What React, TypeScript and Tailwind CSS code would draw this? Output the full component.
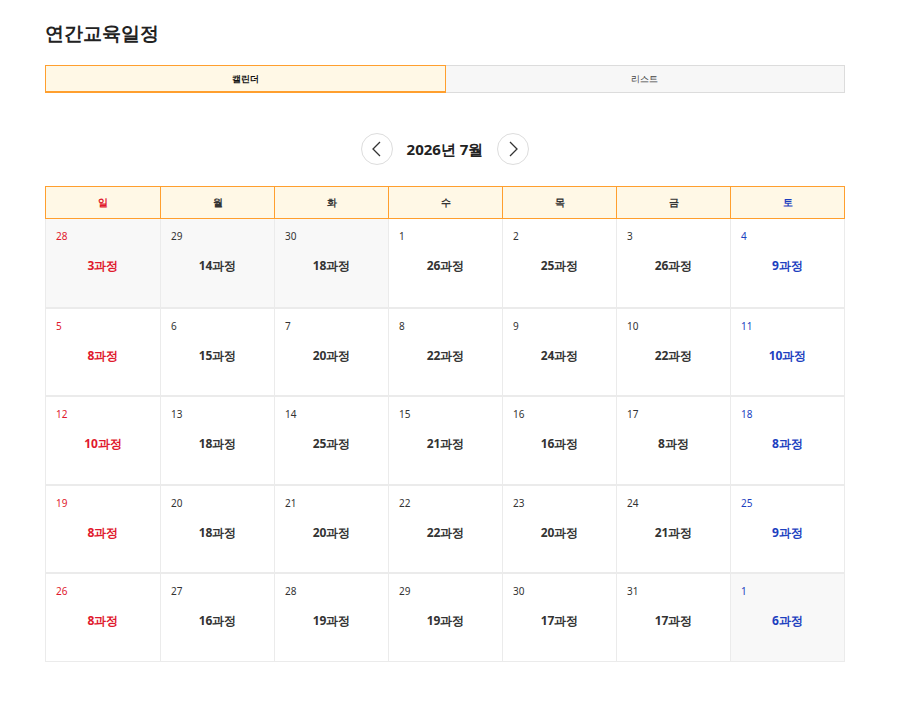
const weeks: [number, number, boolean][][] = [
  [[28,3,true],[29,14,true],[30,18,true],[1,26,false],[2,25,false],[3,26,false],[4,9,false]],
  [[5,8,false],[6,15,false],[7,20,false],[8,22,false],[9,24,false],[10,22,false],[11,10,false]],
  [[12,10,false],[13,18,false],[14,25,false],[15,21,false],[16,16,false],[17,8,false],[18,8,false]],
  [[19,8,false],[20,18,false],[21,20,false],[22,22,false],[23,20,false],[24,21,false],[25,9,false]],
  [[26,8,false],[27,16,false],[28,19,false],[29,19,false],[30,17,false],[31,17,false],[1,6,true]],
];
const days = ["일","월","화","수","목","금","토"];
const color = (i: number) => (i === 0 ? "text-[#e0182d]" : i === 6 ? "text-[#1d3fbf]" : "text-[#333]");

export default function App() {
  return (
    <div className="w-[898px] h-[701px] bg-white font-['Noto_Sans_CJK_KR',sans-serif]">
      <div className="ml-[45px] w-[800px] pt-[19px]">
        <h1 className="text-[19px] font-bold text-[#222] leading-[28px]">연간교육일정</h1>
        <div className="mt-[18px] flex h-[28px] text-[9px] font-bold">
          <div className="flex-1 flex items-center justify-center bg-[#fff8e6] border border-[#ff9f2e] border-b-2 text-[#111]">캘린더</div>
          <div className="flex-1 flex items-center justify-center bg-[#f7f7f7] border border-[#dcdcdc] border-l-0 text-[#444] font-medium">리스트</div>
        </div>
        <div className="mt-[40px] flex items-center justify-center gap-[12px]">
          <button className="w-[32px] h-[32px] rounded-full border border-[#ddd] flex items-center justify-center">
            <svg width="18" height="18" viewBox="0 0 18 18" fill="none" stroke="#333" strokeWidth="1.3"><path d="M12 2L5 9l7 7"/></svg>
          </button>
          <span className="text-[15px] font-bold text-[#222] px-[2px]">2026년 7월</span>
          <button className="w-[32px] h-[32px] rounded-full border border-[#ddd] flex items-center justify-center">
            <svg width="18" height="18" viewBox="0 0 18 18" fill="none" stroke="#333" strokeWidth="1.3"><path d="M6 2l7 7-7 7"/></svg>
          </button>
        </div>
        <div className="mt-[21px]">
          <div className="grid grid-cols-7 h-[33px] bg-[#fff8e6] border border-[#ff9f2e]">
            {days.map((d, i) => (
              <div key={d} className={`flex items-center justify-center text-[10px] font-bold ${i > 0 ? "border-l border-[#ff9f2e]" : ""} ${color(i)}`}>{d}</div>
            ))}
          </div>
          {weeks.map((w, wi) => (
            <div key={wi} className={`grid grid-cols-7 h-[88.6px] border-x border-b border-[#ebebeb] ${wi > 0 ? "border-t" : ""}`}>
              {w.map(([d, n, other], i) => (
                <div key={i} className={`relative ${i > 0 ? "border-l border-[#ebebeb]" : ""} ${other ? "bg-[#f8f8f8]" : "bg-white"}`}>
                  <div className={`absolute left-[10px] top-[10px] text-[10px] ${color(i)}`}>{d}</div>
                  <div className={`absolute left-0 right-0 top-[38px] text-center text-[12px] font-bold ${color(i)}`}>{n}과정</div>
                </div>
              ))}
            </div>
          ))}
        </div>
      </div>
    </div>
  );
}
